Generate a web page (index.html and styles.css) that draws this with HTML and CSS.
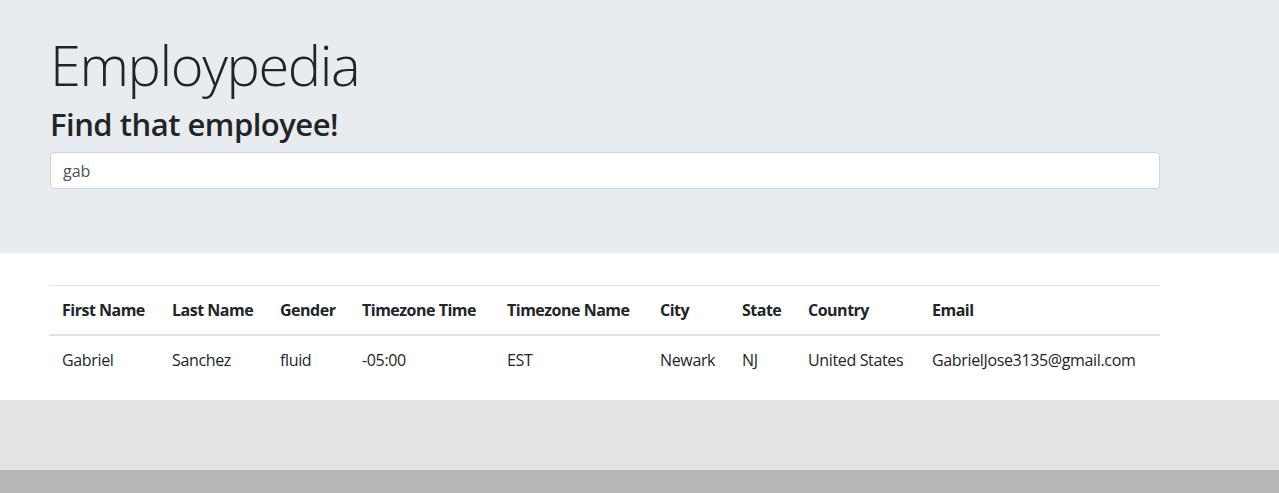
FILE: index.html
```html
<!DOCTYPE html>
<html lang="en">
<head>
<meta charset="utf-8">
<title>Employpedia</title>
<link rel="stylesheet" href="styles.css">
</head>
<body>
<header class="jumbotron">
  <div class="container">
    <h1 class="display">Employpedia</h1>
    <h2 class="subtitle">Find that employee!</h2>
    <input class="search" type="text" value="gab">
  </div>
</header>
<main class="container results">
  <table class="table">
    <thead>
      <tr>
        <th class="c1">First Name</th>
        <th class="c2">Last Name</th>
        <th class="c3">Gender</th>
        <th class="c4">Timezone Time</th>
        <th class="c5">Timezone Name</th>
        <th class="c6">City</th>
        <th class="c7">State</th>
        <th class="c8">Country</th>
        <th class="c9">Email</th>
      </tr>
    </thead>
    <tbody>
      <tr>
        <td>Gabriel</td>
        <td>Sanchez</td>
        <td>fluid</td>
        <td>-05:00</td>
        <td>EST</td>
        <td>Newark</td>
        <td>NJ</td>
        <td>United States</td>
        <td>GabrielJose3135@gmail.com</td>
      </tr>
    </tbody>
  </table>
</main>
<div class="footer-light"></div>
<div class="footer-dark"></div>
</body>
</html>
```
FILE: styles.css
```css
* { box-sizing: border-box; }
html, body { margin: 0; padding: 0; }
body {
  font-family: "Open Sans", "Noto Sans", sans-serif;
  font-size: 16px;
  line-height: 1.5;
  color: #212529;
  background: #fff;
}
.container {
  width: 1110px;
  margin-left: 50px;
}
.jumbotron {
  background: #e9ecef;
  height: 253px;
  padding-top: 31px;
}
.display {
  margin: 0 0 8px;
  font-size: 56px;
  font-weight: 300;
  line-height: 1.2;
  letter-spacing: -1.4px;
}
.subtitle {
  margin: 0 0 9px;
  font-size: 31px;
  font-weight: 600;
  line-height: 1.2;
  letter-spacing: -0.5px;
}
.search {
  display: block;
  width: 100%;
  height: 37px;
  padding: 6px 12px;
  font-family: inherit;
  font-size: 16px;
  color: #495057;
  background: #fff;
  border: 1px solid #ced4da;
  border-radius: 4px;
}
.results {
  padding-top: 32px;
  padding-bottom: 16px;
}
.table {
  width: 100%;
  border-collapse: collapse;
  table-layout: fixed;
  letter-spacing: -0.35px;
}
.table th, .table td {
  padding: 12px;
  text-align: left;
  vertical-align: top;
  border-top: 1px solid #dee2e6;
  white-space: nowrap;
}
.table th {
  font-weight: 700;
  letter-spacing: -0.5px;
  border-bottom: 2px solid #dee2e6;
}
.c1 { width: 110px; }
.c2 { width: 108px; }
.c3 { width: 82px; }
.c4 { width: 145px; }
.c5 { width: 153px; }
.c6 { width: 82px; }
.c7 { width: 66px; }
.c8 { width: 124px; }
.c9 { width: 240px; }
.footer-light {
  background: #e3e3e3;
  height: 70px;
}
.footer-dark {
  background: #b7b7b7;
  height: 40px;
}
```
